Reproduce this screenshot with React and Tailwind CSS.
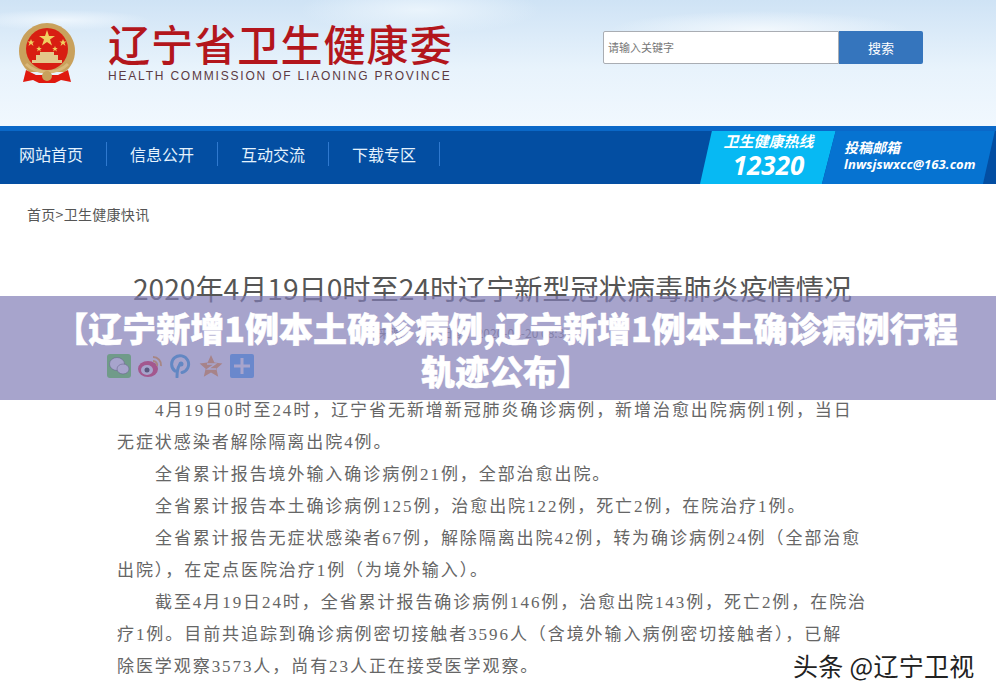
const cjk = { fontFamily: '"Noto Sans CJK SC", "Liberation Sans", sans-serif' };
const serif = { fontFamily: '"Liberation Serif", "Noto Sans CJK SC", serif' };

const navItems = ["网站首页", "信息公开", "互动交流", "下载专区"];

const paragraphs = [
  { text: "4月19日0时至24时，辽宁省无新增新冠肺炎确诊病例，新增治愈出院病例1例，当日", indent: true },
  { text: "无症状感染者解除隔离出院4例。" },
  { text: "全省累计报告境外输入确诊病例21例，全部治愈出院。", indent: true },
  { text: "全省累计报告本土确诊病例125例，治愈出院122例，死亡2例，在院治疗1例。", indent: true },
  { text: "全省累计报告无症状感染者67例，解除隔离出院42例，转为确诊病例24例（全部治愈", indent: true },
  { text: "出院），在定点医院治疗1例（为境外输入）。" },
  { text: "截至4月19日24时，全省累计报告确诊病例146例，治愈出院143例，死亡2例，在院治", indent: true },
  { text: "疗1例。目前共追踪到确诊病例密切接触者3596人（含境外输入病例密切接触者），已解" },
  { text: "除医学观察3573人，尚有23人正在接受医学观察。" },
];

function Emblem() {
  return (
    <svg width="58" height="64" viewBox="0 0 58 64" className="shrink-0">
      <path d="M29 1C44 1 57 13 57 29c0 9-4 16-10 21H11C5 45 1 38 1 29 1 13 14 1 29 1z" fill="#c9a15c" />
      <circle cx="29" cy="27" r="21" fill="#d81e12" />
      <path d="M29 8l2 6h6l-5 3.500 2 6-5-3.600-5 3.600 2-6-5-3.500h6z" fill="#f0d060" />
      <path d="M13 17l1 2.500h2.500l-2 1.500 1 3-2.500-2-2.500 2 1-3-2-1.500H12zM45 17l1 2.500h2.500l-2 1.500 1 3-2.500-2-2.500 2 1-3-2-1.500H44zM21 24l.8 2h2l-1.600 1.200.6 2.200-1.800-1.400-1.800 1.400.6-2.200L18.200 26h2zM37 24l.8 2h2l-1.600 1.200.6 2.200-1.800-1.400-1.800 1.400.6-2.200L34.200 26h2z" fill="#f0d060" />
      <path d="M14 38h30v3H14zM18 33h22v5H18zM22 30h14v3H22z" fill="#e3c98b" />
      <path d="M8 42c6 6 12 8 21 8s15-2 21-8" fill="none" stroke="#d9b878" strokeWidth="3" />
      <path d="M8 48l10 5h22l10-5 3 12-10-2-6 3H21l-6-3-10 2z" fill="#e0190f" />
      <circle cx="29" cy="54" r="5" fill="#c9a15c" />
    </svg>
  );
}

function ShareIcons() {
  return (
    <div className="flex items-center gap-[7px]">
      <svg width="24" height="24" viewBox="0 0 24 24">
        <rect width="24" height="24" rx="3" fill="#46e020" />
        <ellipse cx="10" cy="10" rx="7.500" ry="6.500" fill="#fff" stroke="#333" strokeWidth=".6" />
        <ellipse cx="16" cy="15" rx="6" ry="5" fill="#fff" stroke="#333" strokeWidth=".6" />
      </svg>
      <svg width="25" height="24" viewBox="0 0 25 24">
        <ellipse cx="10" cy="15" rx="10" ry="8" fill="#f00030" />
        <ellipse cx="9" cy="16" rx="6" ry="5" fill="#fff" />
        <circle cx="9" cy="16" r="2.500" fill="#000" />
        <path d="M15 3a8 8 0 0 1 8 9M15 7a4 4 0 0 1 4 5" fill="none" stroke="#ff9a10" strokeWidth="2" />
      </svg>
      <svg width="22" height="24" viewBox="0 0 22 24">
        <path d="M7 23c0-5 .5-9 2.500-12M5 17a8.500 8.500 0 1 1 7 1.500" fill="none" stroke="#1a9ee0" strokeWidth="3" strokeLinecap="round" />
        <circle cx="11" cy="10" r="2.500" fill="#1a9ee0" />
      </svg>
      <svg width="24" height="24" viewBox="0 0 24 24">
        <path d="M12 1l3.400 7.600 8 .8-6 5.400 1.800 8L12 18.600 4.800 22.800l1.800-8-6-5.400 8-.8z" fill="#ff9020" />
        <path d="M8 10h8l-7 5h8" fill="none" stroke="#fff" strokeWidth="1.500" />
      </svg>
      <div className="flex h-6 w-6 items-center justify-center rounded-[2px] bg-[#34a0ff]">
        <svg width="16" height="16" viewBox="0 0 16 16">
          <path d="M8 0v16M0 8h16" stroke="#fff" strokeWidth="3" />
        </svg>
      </div>
    </div>
  );
}

export default function App() {
  return (
    <div className="relative h-[697px] w-[996px] overflow-hidden bg-white" style={cjk}>
      <header className="flex h-[126px] bg-[radial-gradient(ellipse_at_60px_20px,#eef6fd_0,transparent_90px),radial-gradient(ellipse_at_420px_10px,#eaf4fc_0,transparent_120px),radial-gradient(ellipse_at_760px_30px,#f2f8fd_0,transparent_150px),linear-gradient(to_bottom,#cfe3f5,#e8f3fc_55%,#f1f8fe)] pl-[18px] pt-[22px]">
        <Emblem />
        <div className="ml-[32px] w-[344px]">
          <div className="whitespace-nowrap text-[42px] font-medium leading-[42px] tracking-[1.100px] text-[#b3161c]">辽宁省卫生健康委</div>
          <div className="mt-[5px] whitespace-nowrap text-[12px] leading-[14px] tracking-[1.800px] text-[#5c3a42]" style={{ fontFamily: '"Liberation Sans", sans-serif' }}>
            HEALTH COMMISSION OF LIAONING PROVINCE
          </div>
        </div>
        <div className="ml-[151px] mt-[9px] flex h-[33px] items-stretch">
          <div className="flex w-[236px] items-center rounded-l-[2px] border border-[#a9adb3] bg-white pl-[4px] text-[11px] text-[#777]">请输入关键字</div>
          <div className="flex w-[84px] items-center justify-center rounded-r-[2px] bg-[#3575bd] text-[13px] text-white">搜索</div>
        </div>
      </header>

      <nav className="relative flex h-[58px] items-center overflow-hidden border-t-[5px] border-[#0a68c8] bg-[#034ea2] pb-[7px]">
        <div className="-ml-[4px] flex">
          {navItems.map((item) => (
            <div key={item} className="flex h-[24px] w-[111px] items-center justify-center border-r border-[#2f79cf] text-[16px] text-[#e4f2fd]">
              {item}
            </div>
          ))}
        </div>
        <div className="absolute left-[700px] top-[-5px] flex h-[58px] w-[137px] flex-col items-center justify-center bg-[#07b9f3] italic text-white [clip-path:polygon(9.500%_0,100%_0,89%_100%,0_100%)]">
          <div className="text-[15px] font-bold leading-[20px]">卫生健康热线</div>
          <div className="text-[26px] font-bold leading-[29px]" style={{ fontFamily: '"Open Sans", sans-serif' }}>12320</div>
        </div>
        <div className="absolute left-[822px] top-[-5px] flex h-[58px] w-[174px] flex-col justify-center bg-[#0673d1] pl-[22px] italic text-white [clip-path:polygon(8.600%_0,100%_0,92.500%_100%,0_100%)]">
          <div className="text-[14px] font-bold leading-[18px]">投稿邮箱</div>
          <div className="whitespace-nowrap text-[13px] font-bold leading-[17px] tracking-[.1px]" style={{ fontFamily: '"Open Sans", sans-serif' }}>lnwsjswxcc@163.com</div>
        </div>
      </nav>

      <main>
        <div className="pl-[27px] pt-[21px] text-[14px] leading-[18px] tracking-[.3px] text-[#555]">首页&gt;卫生健康快讯</div>
        <h1 className="mt-[49px] whitespace-nowrap pl-[133px] text-[28.150px] font-normal leading-[32px] text-[#555]">2020年4月19日0时至24时辽宁新型冠状病毒肺炎疫情情况</h1>
        <div className="mt-[20px] pl-[378px] text-[12px] leading-[18px] text-[#888]">来源： 发布日期：2020-04-20 08:30</div>
        <div className="ml-[107px] mt-[12px]"><ShareIcons /></div>
        <div className="mt-[17px] pl-[117px] text-[17px] tracking-[1.930px] text-[#666]" style={serif}>
          {paragraphs.map((p) => (
            <p key={p.text} className={`h-[32px] whitespace-nowrap leading-[32px] ${p.indent ? "pl-[38px]" : ""}`}>{p.text}</p>
          ))}
        </div>
      </main>

      {/* title banner over the article */}
      <div className="absolute left-0 right-0 top-[296px] h-[104px] bg-[#817db6]/70">
        <h2 className="pl-[42px] pr-[26px] pt-[10px] text-center text-[34px] font-black leading-[43px] text-white [-webkit-text-stroke:0.5px_white]">
          【辽宁新增1例本土确诊病例,辽宁新增1例本土确诊病例行程轨迹公布】
        </h2>
      </div>

      <div className="absolute left-[793px] top-[650px] text-[25px] leading-[30px] tracking-[.3px] text-[#222]">头条 @辽宁卫视</div>
    </div>
  );
}
